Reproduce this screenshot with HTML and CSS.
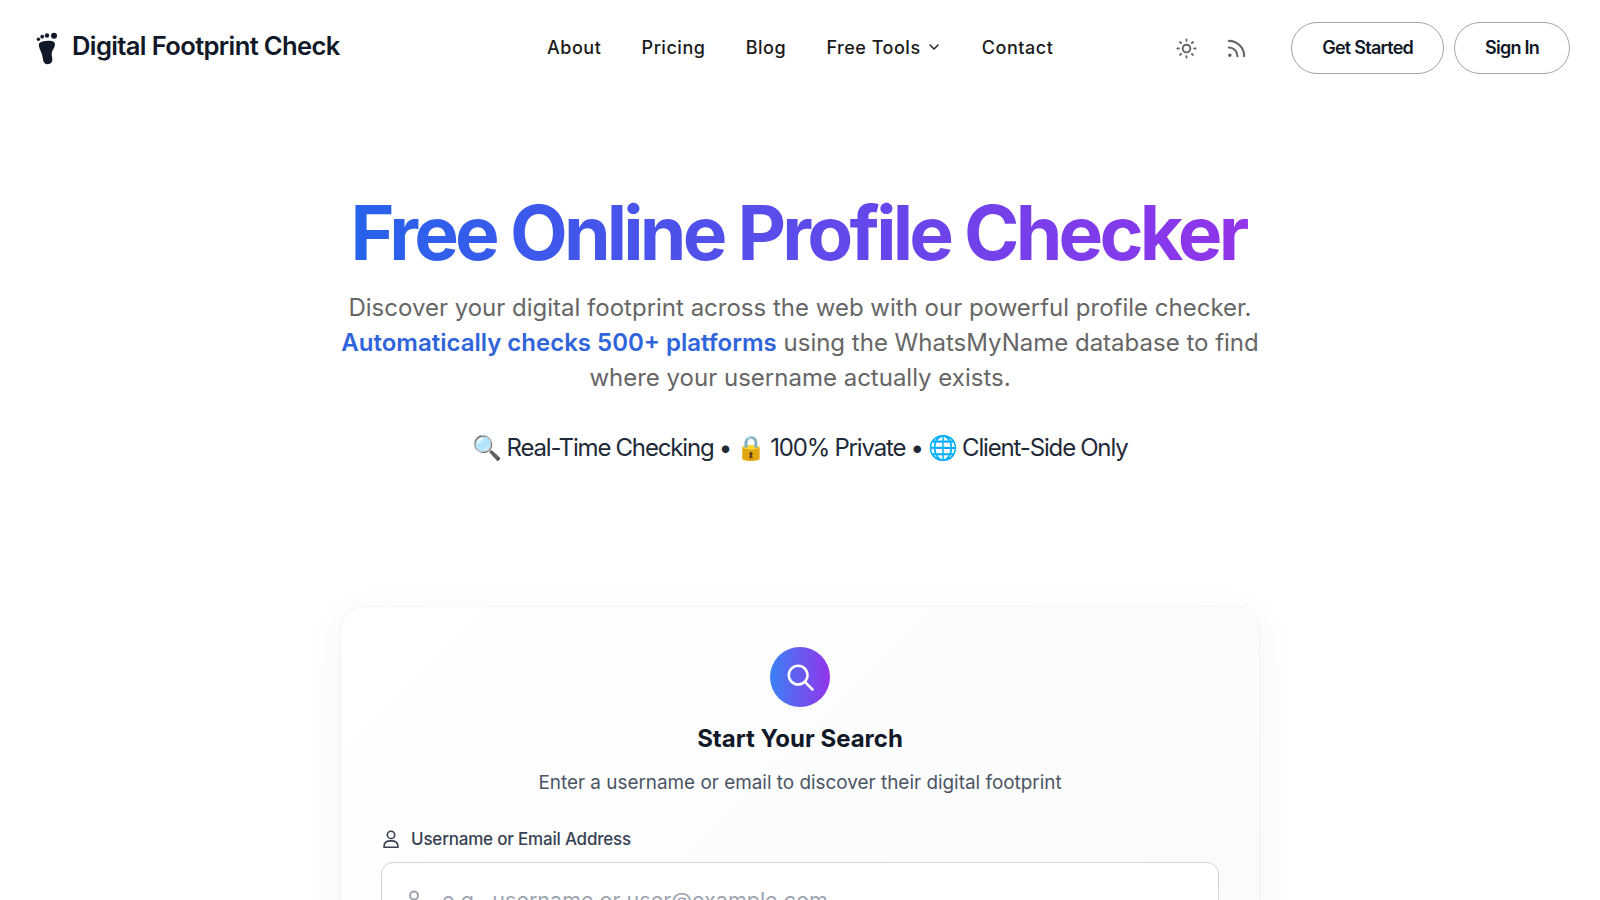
FILE: index.html
```html
<!DOCTYPE html>
<html lang="en">
<head>
    <meta charset="UTF-8">
    <meta name="viewport" content="width=device-width, initial-scale=1.0">
    <title>Free Online Profile Checker - Digital Footprint Check</title>
    <link rel="stylesheet" href="styles.css">
</head>
<body>
    <!-- Header -->
    <header class="site-header">
        <a class="brand" href="#">
            <svg class="brand-icon" viewBox="0 0 22 32" fill="#111827">
                <circle cx="2.4" cy="6.800" r="1.700"/>
                <circle cx="6.200" cy="4.200" r="1.900"/>
                <circle cx="11" cy="3" r="2.200"/>
                <circle cx="18" cy="3.200" r="3"/>
                <path d="M3.500 10.500c2.500-2 8-2.800 12-2 3.500.8 4 3 3 5.500-1 2.800-2.600 4.500-2.800 7-.2 3 1 4.500.6 7-.4 2.500-2.500 3.800-4.800 3.800-2.600 0-4-1.700-4.400-4.300-.5-3.300-.8-5.200-2-8C4 17 1.800 12.500 3.500 10.500z"/>
            </svg>
            <span class="brand-name">Digital Footprint Check</span>
        </a>
        <nav class="main-nav">
            <a href="#">About</a>
            <a href="#">Pricing</a>
            <a href="#">Blog</a>
            <a class="has-caret" href="#">Free Tools
                <svg viewBox="0 0 24 24" fill="none" stroke="currentColor" stroke-width="2" stroke-linecap="round" stroke-linejoin="round"><path d="M6 9l6 6 6-6"/></svg>
            </a>
            <a href="#">Contact</a>
        </nav>
        <div class="header-actions">
            <div class="header-icons">
                <svg viewBox="0 0 24 24" fill="none" stroke="currentColor" stroke-width="2" stroke-linecap="round">
                    <circle cx="12" cy="12" r="4"/>
                    <path d="M12 2.500v1.500M12 20v1.500M2.500 12H4M20 12h1.500M5.300 5.300l1 1M17.700 17.700l1 1M5.300 18.700l1-1M17.700 6.300l1-1"/>
                </svg>
                <svg viewBox="0 0 24 24" fill="none" stroke="currentColor" stroke-width="2.200" stroke-linecap="round">
                    <path d="M4 4c8.800 0 16 7.200 16 16M4 11c5 0 9 4 9 9"/>
                    <circle cx="5" cy="19" r="1.800" fill="currentColor" stroke="none"/>
                </svg>
            </div>
            <a class="btn-outline" href="#">Get Started</a>
            <a class="btn-outline" href="#">Sign In</a>
        </div>
    </header>

    <!-- Hero -->
    <section class="hero">
        <h1>Free Online Profile Checker</h1>
        <p class="hero-text">Discover your digital footprint across the web with our powerful profile checker. <strong>Automatically checks 500+ platforms</strong> using the WhatsMyName database to find where your username actually exists.</p>
        <p class="hero-badges">🔍 Real-Time Checking • 🔒 100% Private • 🌐 Client-Side Only</p>
    </section>

    <!-- Search card -->
    <section class="search-card">
        <div class="search-icon">
            <svg viewBox="0 0 24 24" fill="none" stroke="#fff" stroke-width="2" stroke-linecap="round"><circle cx="10.500" cy="10.500" r="7.500"/><path d="M16 16l6 6"/></svg>
        </div>
        <h2>Start Your Search</h2>
        <p class="search-sub">Enter a username or email to discover their digital footprint</p>
        <label class="field-label" for="query">
            <svg viewBox="0 0 24 24" fill="none" stroke="currentColor" stroke-width="1.800" stroke-linecap="round"><circle cx="12" cy="7.500" r="4"/><path d="M4.500 21v-1.500c0-3.500 3-5.500 7.500-5.500s7.500 2 7.500 5.500V21z"/></svg>
            Username or Email Address
        </label>
        <div class="field-box">
            <svg viewBox="0 0 24 24" fill="none" stroke="#9ca3af" stroke-width="2" stroke-linecap="round"><circle cx="12" cy="7.500" r="4"/><path d="M4.500 21c0-4 3-7 7.500-7s7.500 3 7.500 7"/></svg>
            <input id="query" type="text" placeholder="e.g., username or user@example.com">
        </div>
    </section>
</body>
</html>
```

FILE: styles.css
```css
* {
    margin: 0;
    padding: 0;
    box-sizing: border-box;
}

body {
    font-family: Inter, 'Noto Sans', sans-serif;
    background: #fff;
    color: #111827;
    overflow: hidden;
    height: 900px;
}

a {
    color: inherit;
    text-decoration: none;
}

.site-header {
    height: 96px;
    padding: 0 30px 0 36px;
    display: flex;
    align-items: center;
}

.brand {
    display: flex;
    align-items: center;
    gap: 14px;
    width: 511px;
    margin-top: -5px;
}

.brand-icon {
    width: 22px;
    height: 33px;
    margin: 3px 0 -3px;
}

.brand-name {
    font-size: 25.6px;
    font-weight: 600;
    letter-spacing: -0.65px;
}

.main-nav {
    display: flex;
    align-items: center;
    gap: 40.25px;
    margin-top: -2px;
    font-size: 18px;
    font-weight: 500;
    letter-spacing: 0.52px;
    color: #1a1a1a;
}

.has-caret {
    display: flex;
    align-items: center;
    gap: 5px;
}

.has-caret svg {
    width: 16px;
    height: 16px;
}

.header-actions {
    margin-left: auto;
    display: flex;
    align-items: center;
    gap: 10px;
}

.header-icons {
    display: flex;
    gap: 27px;
    margin-right: 33px;
    color: #666;
}

.header-icons svg {
    width: 23px;
    height: 23px;
}

.btn-outline {
    height: 52px;
    padding: 0 30px 2px;
    display: flex;
    align-items: center;
    border: 1px solid #a3a3a3;
    border-radius: 26px;
    font-size: 18px;
    font-weight: 600;
    letter-spacing: -0.75px;
}

.hero {
    width: 920px;
    margin: 0 auto;
    text-align: center;
}

.hero h1 {
    margin-top: 97px;
    font-size: 75px;
    font-weight: 700;
    line-height: 80px;
    letter-spacing: -3.8px;
    text-indent: -4px;
    white-space: nowrap;
    background: linear-gradient(90deg, #2563eb, #9333ea);
    background-clip: text;
    -webkit-background-clip: text;
    color: transparent;
}

.hero-text {
    margin-top: 17px;
    font-size: 24px;
    line-height: 35px;
    color: #666;
}

.hero-text strong {
    font-weight: 600;
    color: #2f64db;
}

.hero-badges {
    margin-top: 35px;
    font-size: 24px;
    line-height: 36px;
    letter-spacing: -1.15px;
    word-spacing: -0.45px;
    color: #1f2937;
}

.search-card {
    width: 920px;
    margin: 140px auto 0;
    padding: 40px;
    text-align: center;
    border: 1px solid #f3f4f6;
    border-radius: 24px;
    background: linear-gradient(135deg, #fff, #f9fafb);
    box-shadow: 0 10px 40px rgba(0, 0, 0, 0.05);
}

.search-icon {
    width: 60px;
    height: 60px;
    margin: 0 auto 17px;
    display: flex;
    align-items: center;
    justify-content: center;
    border-radius: 50%;
    background: linear-gradient(90deg, #3b82f6, #9333ea);
}

.search-icon svg {
    width: 30px;
    height: 30px;
}

.search-card h2 {
    font-size: 24px;
    font-weight: 700;
    line-height: 30px;
}

.search-sub {
    margin-top: 15px;
    font-size: 18.9px;
    line-height: 28px;
    color: #4b5563;
}

.field-label {
    margin-top: 30px;
    display: flex;
    align-items: center;
    gap: 9px;
    font-size: 17px;
    font-weight: 500;
    letter-spacing: -0.2px;
    line-height: 24px;
    color: #374151;
}

.field-label svg {
    width: 22px;
    height: 22px;
    margin-left: -1px;
}

.field-box {
    margin-top: 11px;
    height: 76px;
    padding: 0 20px;
    display: flex;
    align-items: center;
    gap: 16px;
    background: #fff;
    border: 1px solid #d1d5db;
    border-radius: 12px;
}

.field-box svg {
    width: 24px;
    height: 24px;
}

.field-box input {
    flex: 1;
    border: none;
    outline: none;
    font: inherit;
    font-size: 21.5px;
}

.field-box input::placeholder {
    color: #9ca3af;
}
```
